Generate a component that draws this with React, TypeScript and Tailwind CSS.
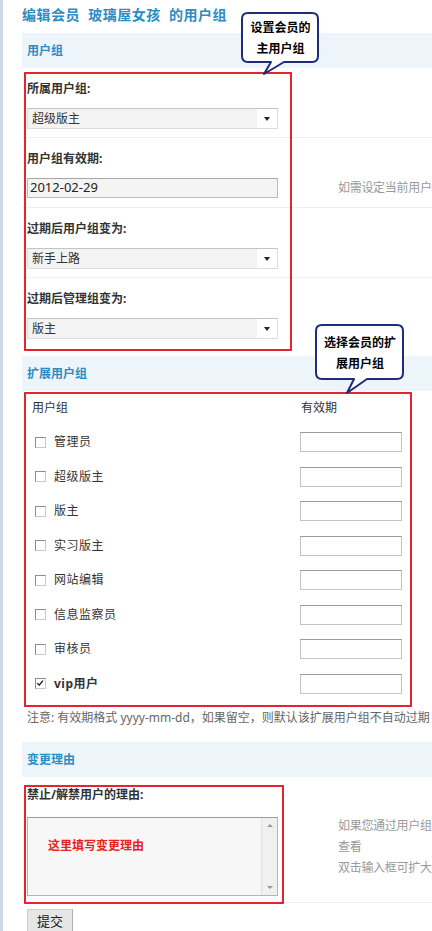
const FONT = "font-['Noto_Sans','Noto_Sans_CJK_SC',sans-serif]";

const extGroups = [
  { name: "管理员", checked: false },
  { name: "超级版主", checked: false },
  { name: "版主", checked: false },
  { name: "实习版主", checked: false },
  { name: "网站编辑", checked: false },
  { name: "信息监察员", checked: false },
  { name: "审核员", checked: false },
  { name: "vip用户", checked: true },
];

function FakeSelect({ value }: { value: string }) {
  return (
    <div className="flex h-[21px] w-[251px] border border-[#dcdcdc] border-t-[#c4c4c4] bg-white">
      <div className="flex h-full flex-1 items-center bg-[#f3f3f3] pl-[4px] text-[12px] text-[#333]">
        {value}
      </div>
      <div className="flex w-[20px] items-center justify-center">
        <div className="h-0 w-0 border-x-[3px] border-t-[4px] border-x-transparent border-t-[#222]" />
      </div>
    </div>
  );
}

function Checkbox({ checked }: { checked: boolean }) {
  return (
    <div className="relative h-[11px] w-[11px] border border-[#c8c8c8] border-l-[#8c8c8c] border-t-[#8c8c8c] bg-white">
      {checked && (
        <svg viewBox="0 0 11 11" className="absolute left-0 top-0 h-[9px] w-[9px]">
          <path d="M1.5 5 L4 7.5 L8.5 2" fill="none" stroke="#111" strokeWidth="1.6" />
        </svg>
      )}
    </div>
  );
}

function SectionBar({ title }: { title: string }) {
  return (
    <div className="flex h-[35px] items-center bg-[#eef5fa] pl-[5px] text-[12px] font-bold text-[#2a8dc3]">
      {title}
    </div>
  );
}

function FieldRow({
  label,
  children,
  hint,
  last,
}: {
  label: string;
  children: React.ReactNode;
  hint?: string;
  last?: boolean;
}) {
  return (
    <div className={`flex ${last ? "h-[76px]" : "h-[70px] border-b border-[#efefef]"}`}>
      <div className="w-[316px] shrink-0 pl-[5px] pt-[13px]">
        <div className="h-[16px] text-[12px] font-bold leading-[16px] text-[#333]">{label}</div>
        <div className="mt-[11px]">{children}</div>
      </div>
      {hint && (
        <div className="whitespace-nowrap pt-[42px] text-[12px] leading-[16px] tracking-[-0.3px] text-[#999]">{hint}</div>
      )}
    </div>
  );
}

function Bubble({ lines, w, h, tail }: { lines: string[]; w: number; h: number; tail: string }) {
  return (
    <div className="relative">
      <svg width={w + 2} height={h + 16} className="block">
        <path d={tail} fill="#fff" stroke="#1f2b7b" strokeWidth="2" strokeLinejoin="round" />
      </svg>
      <div
        className="absolute left-0 top-0 flex flex-col items-center justify-center text-[12px] font-bold leading-[21px] text-black"
        style={{ width: w + 2, height: h + 2 }}
      >
        {lines.map((l) => (
          <div key={l}>{l}</div>
        ))}
      </div>
    </div>
  );
}

export default function App() {
  return (
    <div className={`relative min-h-[931px] w-[432px] overflow-hidden border-l-[3px] border-[#cbd9e5] bg-white ${FONT}`}>
      <div className="w-[700px] pl-[19px]">
        <div className="flex h-[33px] items-center pb-[4px] text-[14px] font-bold tracking-[0.5px] text-[#2a8dc3]">
          编辑会员&nbsp;&nbsp;玻璃屋女孩&nbsp;&nbsp;的用户组
        </div>

        <SectionBar title="用户组" />
        <FieldRow label="所属用户组:">
          <FakeSelect value="超级版主" />
        </FieldRow>
        <FieldRow label="用户组有效期:" hint="如需设定当前用户">
          <div className="flex h-[20px] w-[251px] items-center border border-[#bdbdbd] border-t-[#a8a8a8] bg-[#f4f4f4] pl-[2px] text-[13px] text-[#222]">
            2012-02-29
          </div>
        </FieldRow>
        <FieldRow label="过期后用户组变为:">
          <FakeSelect value="新手上路" />
        </FieldRow>
        <FieldRow label="过期后管理组变为:" last>
          <FakeSelect value="版主" />
        </FieldRow>

        <div className="h-[2px]" />
        <SectionBar title="扩展用户组" />
        <div className="w-[390px]">
          <div className="flex h-[34px] items-center text-[12px] text-[#333]">
            <div className="w-[278px] pl-[10px]">用户组</div>
            <div className="pl-[1px]">有效期</div>
          </div>
          {extGroups.map((g) => (
            <div key={g.name} className="flex h-[34.5px] items-center text-[12px] text-[#333]">
              <div className="flex w-[278px] items-center pl-[13px]">
                <Checkbox checked={g.checked} />
                <span className={`ml-[8px] tracking-[0.5px] ${g.checked ? "font-bold" : ""}`}>{g.name}</span>
              </div>
              <div className="h-[20px] w-[102px] border border-[#c4c4c4] border-t-[#9a9a9a] bg-white" />
            </div>
          ))}
        </div>
        <div className="h-[41px] whitespace-nowrap pl-[5px] pt-[9px] text-[12px] leading-[16px] text-[#666]">
          注意: 有效期格式 yyyy-mm-dd，如果留空，则默认该扩展用户组不自动过期
        </div>

        <SectionBar title="变更理由" />
        <div className="flex h-[126px] border-b border-[#efefef]">
          <div className="w-[316px] shrink-0 pl-[5px] pt-[10px]">
            <div className="h-[16px] text-[12px] font-bold leading-[16px] text-[#333]">禁止/解禁用户的理由:</div>
            <div className="mt-[14px] flex h-[79px] w-[251px] border border-[#b5b5b5] border-t-[#9c9c9c] bg-[#f7f7f7]">
              <div className="flex-1" />
              <div className="flex w-[16px] flex-col items-center justify-between border-l border-[#e2e2e2] bg-[#f0f0f0] py-[6px]">
                <div className="h-0 w-0 border-x-[3px] border-b-[3px] border-x-transparent border-b-[#999]" />
                <div className="h-0 w-0 border-x-[3px] border-t-[3px] border-x-transparent border-t-[#999]" />
              </div>
            </div>
          </div>
          <div className="whitespace-nowrap pt-[38px] text-[12px] leading-[21px] tracking-[-0.3px] text-[#999]">
            <div>如果您通过用户组</div>
            <div>查看</div>
            <div>双击输入框可扩大</div>
          </div>
        </div>
        <div className="pl-[5px] pt-[5px]">
          <button className="h-[26px] w-[46px] border border-[#b0b0b0] border-l-[#d0d0d0] border-t-[#d0d0d0] bg-[#e6e6e6] text-[13px] text-[#222]">
            提交
          </button>
        </div>
      </div>

      {/* annotation overlays */}
      <div className="pointer-events-none absolute left-[21px] top-[72px] h-[279px] w-[268px] border-2 border-[#e3262d]" />
      <div className="pointer-events-none absolute left-[21px] top-[392px] h-[315px] w-[388px] border-2 border-[#e3262d]" />
      <div className="pointer-events-none absolute left-[21px] top-[785px] h-[119px] w-[260px] border-2 border-[#e3262d]" />

      <div className="absolute left-[238px] top-[12px]">
        <Bubble
          lines={["设置会员的", "主用户组"]}
          w={77}
          h={50}
          tail="M7,1 H71 Q77,1 77,7 V44 Q77,50 71,50 H43 L23,62 L30,50 H7 Q1,50 1,44 V7 Q1,1 7,1 Z"
        />
      </div>
      <div className="absolute left-[312px] top-[324px]">
        <Bubble
          lines={["选择会员的扩", "展用户组"]}
          w={88}
          h={55}
          tail="M7,1 H82 Q88,1 88,7 V49 Q88,55 82,55 H52 L32,69 L39,55 H7 Q1,55 1,49 V7 Q1,1 7,1 Z"
        />
      </div>

      <div className="absolute left-[45px] top-[838px] text-[12px] font-bold leading-[16px] text-[#e5231f]">
        这里填写变更理由
      </div>
    </div>
  );
}
